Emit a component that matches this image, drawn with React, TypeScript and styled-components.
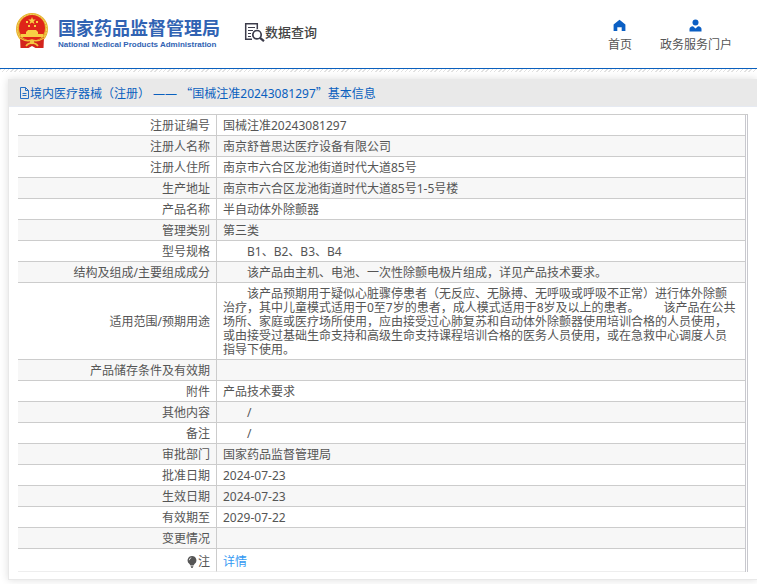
import React from 'react';
import styled, { createGlobalStyle } from 'styled-components';

const GlobalStyle = createGlobalStyle`
  * { box-sizing: border-box; }
  body {
    margin: 0;
    overflow: hidden;
    background: #fff;
    color: #555;
    font: 12px/14px "Noto Sans", "Noto Sans CJK SC", sans-serif;
    text-spacing-trim: space-all;
  }
  a { text-decoration: none; }
`;

const Header = styled.header`
  display: flex;
  align-items: flex-start;
  height: 69px;
  padding: 12px 25px 0 15px;
  border-bottom: 1px solid #0a60be;
`;

const Brand = styled.a`
  display: flex;
  gap: 9px;
  color: #3163b3;
`;

const BrandText = styled.span`
  display: flex;
  flex-direction: column;
  padding-top: 2px;
`;

const BrandName = styled.span`
  font: 700 18px/26px "Noto Sans CJK SC", sans-serif;
  white-space: nowrap;
`;

const BrandSub = styled.span`
  font: 700 8px/10px "Liberation Sans", sans-serif;
  white-space: nowrap;
`;

const Query = styled.a`
  display: flex;
  align-items: center;
  margin: 10px 0 0 24px;
  color: #444;
  font: 500 13px/20px "Noto Sans CJK SC", sans-serif;
  white-space: nowrap;
`;

const Nav = styled.nav`
  display: flex;
  gap: 28px;
  margin-left: auto;
  padding-top: 7px;
`;

const NavLink = styled.a`
  display: flex;
  flex-direction: column;
  align-items: center;
  gap: 5px;
  color: #555;
  line-height: 16px;
  white-space: nowrap;
`;

const Backdrop = styled.main`
  padding: 10px 0 6px 8px;
  background: repeating-linear-gradient(135deg, #e2e2e2 0 1px, #fff 1px 3px) top / 100% 3px no-repeat;
`;

const Panel = styled.section`
  padding-bottom: 7px;
  background: #fff;
  border: solid #e8e8e8;
  border-width: 0 0 1px 1px;
  box-shadow: 0 0 8px #ddd;
`;

const PanelTitle = styled.h1`
  display: flex;
  align-items: center;
  height: 28px;
  margin: 0;
  padding: 1px 0 0 10px;
  background: #e9e9e9;
  border-bottom: 1px solid #e6eaf2;
  color: #0a60be;
  font-size: 12px;
  font-weight: 400;
  line-height: 16px;
`;

const WideQuote = styled.span`
  font-family: "Noto Sans CJK SC", sans-serif;
`;

const TableFrame = styled.div`
  margin: 7px 9px 0;
  padding-right: 1px;
  border-top: 1px solid #ccc;
  border-right: 1px solid #c8c8ce;
`;

const Table = styled.table`
  width: 100%;
  border-collapse: separate;
  border-spacing: 0;
  border-right: 1px solid #c8c8ce;
  tr:nth-child(even) { background: #f7f7f7; }
  tr:last-child > * { height: 23px; padding-top: 5px; border-bottom-color: #eee; }
`;

const Label = styled.th`
  width: 199px;
  height: 21px;
  padding: 4px 6px 2px 0;
  border: solid #ccc;
  border-width: 0 1px 1px 0;
  font-weight: 400;
  text-align: right;
`;

const Value = styled.td`
  padding: 4px 7px 2px 6px;
  border-bottom: 1px solid #ccc;
  white-space: pre-wrap;
`;

const DetailLink = styled.a`
  color: #3399f3;
`;

const NoteLabel = styled.span`
  display: flex;
  align-items: center;
  justify-content: flex-end;
  gap: 1px;
`;

function Emblem() {
  return (
    <svg width="34" height="37" viewBox="0 0 34 37" aria-hidden="true">
      <circle cx="17" cy="17" r="16" fill="#e6b22e" />
      <circle cx="17" cy="17" r="14.6" fill="none" stroke="#f6d66b" strokeDasharray="2 1" />
      <circle cx="17" cy="16" r="13" fill="#df2419" />
      <path d="M5 25l.5 11h8l3.5-2 3.5 2h8l.5-11-6 3h-12z" fill="#d3241c" />
      <path d="M17 5l1 2.6h2.8l-2.2 1.7.8 2.7-2.4-1.6-2.4 1.6.8-2.7-2.2-1.7H16zM11 9h2v2h-2zM21 9h2v2h-2zM13 13h2v2h-2zM19 13h2v2h-2zM11 20l2-2h8l2 2v2h5v3H6v-3h5z" fill="#f7cf45" />
      <path d="M5 26q6 4 12 2 6 2 12-2M11 34q2-3 6-3t6 3" fill="none" stroke="#f3c13c" strokeWidth="1.5" />
      <circle cx="17" cy="30" r="2.2" fill="#f4c845" />
    </svg>
  );
}

function QueryIcon() {
  return (
    <svg width="21" height="20" viewBox="0 0 21 20" fill="none" stroke="#3c3c4b" aria-hidden="true">
      <path d="M8 17.2H1.7V1.7h11.6V7" strokeWidth="1.5" />
      <path d="M4 5.5h7M4 8.5h5M4 11.5h3M4 14.5h3" />
      <circle cx="13" cy="12.7" r="4.2" strokeWidth="1.7" />
      <path d="M16 15.8l4 3.4" strokeWidth="2.2" />
    </svg>
  );
}

function HomeIcon() {
  return (
    <svg width="13" height="13" viewBox="0 0 13 13" fill="#0b5fc4" aria-hidden="true">
      <path d="M6.5.8L12.4 5.5V12H8.7V8.2H4.3V12H.6V5.5z" />
    </svg>
  );
}

function UserIcon() {
  return (
    <svg width="13" height="13" viewBox="0 0 13 13" fill="#0b5fc4" aria-hidden="true">
      <circle cx="6.5" cy="3.5" r="3" />
      <path d="M.5 12.5V10q0-2.3 3.5-2.8l2.5 2.3L9 7.2q3.5.5 3.5 2.8v2.5z" />
    </svg>
  );
}

function DocumentIcon() {
  return (
    <svg width="11" height="12" viewBox="0 0 11 12" fill="none" stroke="#2870c4" aria-hidden="true">
      <path d="M1.5.5h5l3 3v8h-8zM6.5.5v3h3M3.5 6.5h4M3.5 8.5h4" />
    </svg>
  );
}

function BulbIcon() {
  return (
    <svg width="10" height="12" viewBox="0 0 10 12" fill="#555" aria-hidden="true">
      <path d="M5 0a4.4 4.4 0 0 1 2.5 8L6.5 9.5h-3L2.5 8A4.4 4.4 0 0 1 5 0zM3.5 10.3h3L5.5 12h-1z" />
      <path d="M2.3 4.2Q2.4 2.2 4.3 1.8" fill="none" stroke="#ddd" />
    </svg>
  );
}

const rows: [string, string][] = [
  ['注册证编号', '国械注准20243081297'],
  ['注册人名称', '南京舒普思达医疗设备有限公司'],
  ['注册人住所', '南京市六合区龙池街道时代大道85号'],
  ['生产地址', '南京市六合区龙池街道时代大道85号1-5号楼'],
  ['产品名称', '半自动体外除颤器'],
  ['管理类别', '第三类'],
  ['型号规格', '　　B1、B2、B3、B4'],
  ['结构及组成/主要组成成分', '　　该产品由主机、电池、一次性除颤电极片组成，详见产品技术要求。'],
  ['适用范围/预期用途', '　　该产品预期用于疑似心脏骤停患者（无反应、无脉搏、无呼吸或呼吸不正常）进行体外除颤治疗，其中儿童模式适用于0至7岁的患者，成人模式适用于8岁及以上的患者。　　该产品在公共场所、家庭或医疗场所使用，应由接受过心肺复苏和自动体外除颤器使用培训合格的人员使用，或由接受过基础生命支持和高级生命支持课程培训合格的医务人员使用，或在急救中心调度人员指导下使用。'],
  ['产品储存条件及有效期', ''],
  ['附件', '产品技术要求'],
  ['其他内容', '　　/'],
  ['备注', '　　/'],
  ['审批部门', '国家药品监督管理局'],
  ['批准日期', '2024-07-23'],
  ['生效日期', '2024-07-23'],
  ['有效期至', '2029-07-22'],
  ['变更情况', ''],
];

export default function App() {
  return (
    <>
      <GlobalStyle />
      <Header>
        <Brand href="#">
          <Emblem />
          <BrandText>
            <BrandName>国家药品监督管理局</BrandName>
            <BrandSub>National Medical Products Administration</BrandSub>
          </BrandText>
        </Brand>
        <Query href="#"><QueryIcon />数据查询</Query>
        <Nav>
          <NavLink href="#"><HomeIcon />首页</NavLink>
          <NavLink href="#"><UserIcon />政务服务门户</NavLink>
        </Nav>
      </Header>
      <Backdrop>
        <Panel>
          <PanelTitle>
            <DocumentIcon />
            <span>
              境内医疗器械（注册） —— <WideQuote>“</WideQuote>国械注准20243081297<WideQuote>”</WideQuote>基本信息
            </span>
          </PanelTitle>
          <TableFrame>
            <Table>
              <tbody>
                {rows.map(([label, value]) => (
                  <tr key={label}>
                    <Label scope="row">{label}</Label>
                    <Value>{value}</Value>
                  </tr>
                ))}
                <tr>
                  <Label scope="row"><NoteLabel><BulbIcon />注</NoteLabel></Label>
                  <Value><DetailLink href="#">详情</DetailLink></Value>
                </tr>
              </tbody>
            </Table>
          </TableFrame>
        </Panel>
      </Backdrop>
    </>
  );
}
